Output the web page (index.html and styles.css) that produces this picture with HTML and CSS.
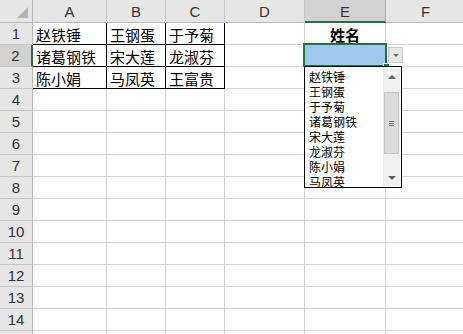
FILE: index.html
```html
<!DOCTYPE html>
<html>
<head>
<meta charset="utf-8">
<link rel="stylesheet" href="styles.css">
</head>
<body>
<div class="sheet">
  <div class="grid">
    <div class="corner"><span class="corner-tri"></span></div>
    <div class="ch">A</div><div class="ch">B</div><div class="ch">C</div><div class="ch">D</div><div class="ch sel">E</div><div class="ch">F</div>

    <div class="rh">1</div>
    <div class="c b">赵铁锤</div><div class="c b">王钢蛋</div><div class="c b">于予菊</div><div class="c"></div><div class="c bold">姓名</div><div class="c"></div>

    <div class="rh sel">2</div>
    <div class="c b">诸葛钢铁</div><div class="c b">宋大莲</div><div class="c b">龙淑芬</div><div class="c"></div><div class="c fill"></div><div class="c"></div>

    <div class="rh">3</div>
    <div class="c b">陈小娟</div><div class="c b">马凤英</div><div class="c b">王富贵</div><div class="c"></div><div class="c"></div><div class="c"></div>

    <div class="rh">4</div><div class="c"></div><div class="c"></div><div class="c"></div><div class="c"></div><div class="c"></div><div class="c"></div>
    <div class="rh">5</div><div class="c"></div><div class="c"></div><div class="c"></div><div class="c"></div><div class="c"></div><div class="c"></div>
    <div class="rh">6</div><div class="c"></div><div class="c"></div><div class="c"></div><div class="c"></div><div class="c"></div><div class="c"></div>
    <div class="rh">7</div><div class="c"></div><div class="c"></div><div class="c"></div><div class="c"></div><div class="c"></div><div class="c"></div>
    <div class="rh">8</div><div class="c"></div><div class="c"></div><div class="c"></div><div class="c"></div><div class="c"></div><div class="c"></div>
    <div class="rh">9</div><div class="c"></div><div class="c"></div><div class="c"></div><div class="c"></div><div class="c"></div><div class="c"></div>
    <div class="rh">10</div><div class="c"></div><div class="c"></div><div class="c"></div><div class="c"></div><div class="c"></div><div class="c"></div>
    <div class="rh">11</div><div class="c"></div><div class="c"></div><div class="c"></div><div class="c"></div><div class="c"></div><div class="c"></div>
    <div class="rh">12</div><div class="c"></div><div class="c"></div><div class="c"></div><div class="c"></div><div class="c"></div><div class="c"></div>
    <div class="rh">13</div><div class="c"></div><div class="c"></div><div class="c"></div><div class="c"></div><div class="c"></div><div class="c"></div>
    <div class="rh">14</div><div class="c"></div><div class="c"></div><div class="c"></div><div class="c"></div><div class="c"></div><div class="c"></div>
    <div class="rh"></div><div class="c"></div><div class="c"></div><div class="c"></div><div class="c"></div><div class="c"></div><div class="c"></div>
  </div>

  <div class="selection"><span class="handle"></span></div>
  <div class="dd-btn"><span class="tri-down small"></span></div>
  <div class="dropdown">
    <ul class="items">
      <li>赵铁锤</li><li>王钢蛋</li><li>于予菊</li><li>诸葛钢铁</li><li>宋大莲</li><li>龙淑芬</li><li>陈小娟</li><li>马凤英</li>
    </ul>
    <div class="scrollbar">
      <div class="arrow"><span class="tri-up"></span></div>
      <div class="track">
        <div class="thumb"><span class="grip"></span><span class="grip"></span><span class="grip"></span></div>
      </div>
      <div class="arrow"><span class="tri-down"></span></div>
    </div>
  </div>
</div>
</body>
</html>
```

FILE: styles.css
```css
html, body {
  margin: 0;
  padding: 0;
  background: #fff;
  overflow: hidden;
}
.sheet {
  position: relative;
  width: 463px;
  height: 334px;
  overflow: hidden;
}
.grid {
  display: grid;
  grid-template-columns: 33px 74px 59px 59px 80px 81px 80px;
  grid-template-rows: 23px repeat(15, 22px);
  font-family: "Liberation Sans", "Noto Sans CJK SC", sans-serif;
}
.grid > div {
  box-sizing: border-box;
}
.corner {
  background: #e6e6e6;
  border-right: 1px solid #b8b8b8;
  border-bottom: 1px solid #b8b8b8;
  position: relative;
}
.corner-tri {
  position: absolute;
  right: 4px;
  bottom: 4px;
  width: 0;
  height: 0;
  border-left: 11px solid transparent;
  border-bottom: 11px solid #b5b5b5;
}
.ch {
  background: #e6e6e6;
  border-right: 1px solid #c6c6c6;
  border-bottom: 1px solid #b8b8b8;
  color: #333;
  font-size: 15px;
  display: flex;
  align-items: center;
  justify-content: center;
  padding-top: 1px;
}
.ch.sel {
  background: #d2d2d2;
  border-bottom: 2px solid #217346;
  border-right-color: #a9a9a9;
}
.rh {
  background: #e6e6e6;
  border-right: 1px solid #b8b8b8;
  border-bottom: 1px solid #c6c6c6;
  color: #333;
  font-size: 15px;
  display: flex;
  align-items: center;
  justify-content: center;
}
.rh.sel {
  background: #d2d2d2;
  border-right: 2px solid #217346;
}
.c {
  border-right: 1px solid #d4d4d4;
  border-bottom: 1px solid #d4d4d4;
  font-family: "Noto Sans CJK SC", sans-serif;
  font-size: 15px;
  color: #000;
  display: flex;
  align-items: center;
  padding-left: 3px;
  padding-top: 1px;
  line-height: 1;
}
.c.b {
  border-right-color: #000;
  border-bottom-color: #000;
}
.c.bold {
  font-weight: bold;
  justify-content: center;
  padding-left: 0;
}
.c.fill {
  background: #9ec9ef;
}
.selection {
  position: absolute;
  left: 303px;
  top: 43px;
  width: 80px;
  height: 20px;
  border: 2px solid #217346;
}
.handle {
  position: absolute;
  right: -5px;
  bottom: -5px;
  width: 5px;
  height: 5px;
  background: #217346;
  border: 1px solid #fff;
}
.dd-btn {
  position: absolute;
  left: 388px;
  top: 47px;
  width: 15px;
  height: 16px;
  box-sizing: border-box;
  background: #e8e8e8;
  border: 1px solid #c8c8c8;
  display: flex;
  align-items: center;
  justify-content: center;
}
.dropdown {
  position: absolute;
  left: 304px;
  top: 66px;
  width: 98px;
  height: 122px;
  box-sizing: border-box;
  border: 1px solid #000;
  background: #fff;
  display: flex;
}
.items {
  list-style: none;
  margin: 0;
  padding: 2px 0 0 4px;
  flex: 1;
  font-family: "Noto Sans CJK SC", sans-serif;
  font-size: 12px;
  line-height: 15px;
  color: #000;
}
.items li {
  height: 15px;
}
.scrollbar {
  width: 17px;
  margin: 1px 1px 1px 0;
  background: #f0f0f0;
  display: flex;
  flex-direction: column;
}
.arrow {
  height: 17px;
  display: flex;
  align-items: center;
  justify-content: center;
}
.track {
  flex: 1;
  display: flex;
  flex-direction: column;
  padding-top: 7px;
}
.thumb {
  height: 62px;
  margin: 0 1px;
  box-sizing: border-box;
  background: #dcdcdc;
  border: 1px solid #c4c4c4;
  display: flex;
  flex-direction: column;
  align-items: center;
  justify-content: center;
  gap: 1px;
}
.grip {
  width: 5px;
  height: 1px;
  background: #707070;
}
.tri-up {
  width: 0;
  height: 0;
  border-left: 4px solid transparent;
  border-right: 4px solid transparent;
  border-bottom: 4px solid #606060;
}
.tri-down {
  width: 0;
  height: 0;
  border-left: 4px solid transparent;
  border-right: 4px solid transparent;
  border-top: 4px solid #606060;
}
.tri-down.small {
  border-left-width: 3px;
  border-right-width: 3px;
  border-top: 3px solid #707070;
}
```
